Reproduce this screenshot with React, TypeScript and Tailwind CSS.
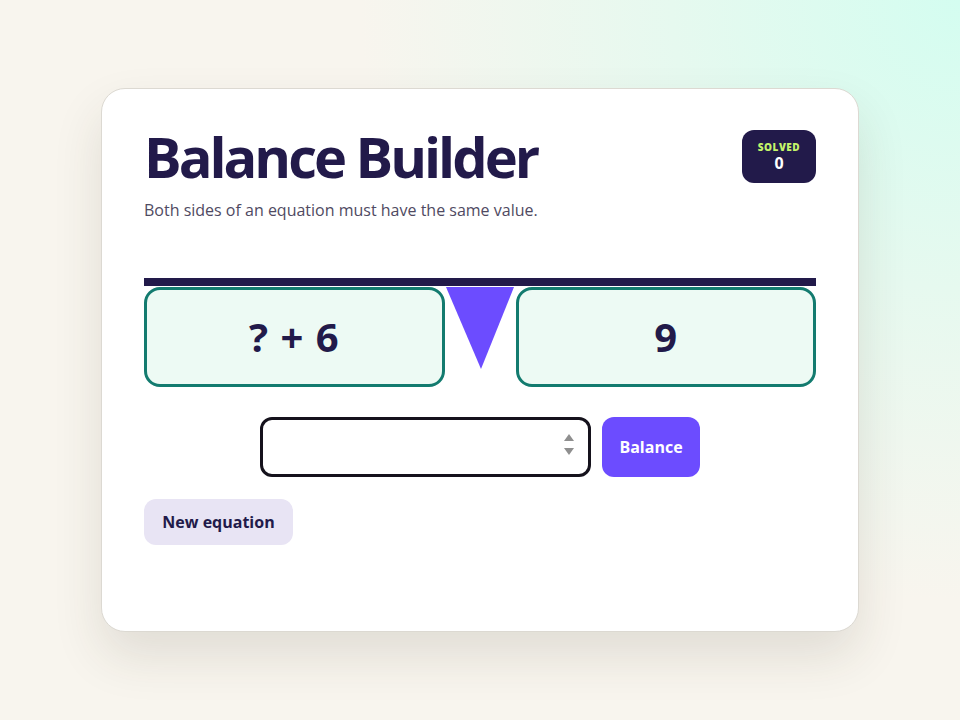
import React from "react";

const font = { fontFamily: '"Open Sans", "Noto Sans", sans-serif' };

export default function App() {
  return (
    <div
      className="min-h-[720px] w-full flex items-start justify-center bg-[#f8f5ee] bg-[radial-gradient(circle_at_100%_0%,#d4fdf0_0%,#e6f9ef_24%,#f8f5ee_50%)]"
      style={font}
    >
      <div className="mt-[88px] w-[758px] h-[544px] rounded-[24px] border border-[#dcd9d2] bg-white px-[42px] pt-[32px] shadow-[0_24px_50px_rgba(60,50,30,0.12)]">
        {/* Header */}
        <div className="flex items-start justify-between">
          <div>
            <h1 className="text-[56px] leading-[70px] font-bold tracking-[-3px] text-[#221a4a]">
              Balance Builder
            </h1>
            <p className="mt-[8px] text-[16px] leading-[22px] text-[#4f4a62]">
              Both sides of an equation must have the same value.
            </p>
          </div>
          <div className="mt-[9px] flex h-[53px] w-[74px] flex-col items-center justify-center gap-[1px] rounded-[12px] bg-[#221a4a]">
            <span className="text-[10px] font-extrabold leading-[11px] tracking-[0.5px] text-[#c4f46a]">
              SOLVED
            </span>
            <span className="text-[16px] font-bold leading-[18px] text-white">0</span>
          </div>
        </div>

        {/* Scale */}
        <div className="mt-[57px]">
          <div className="h-[8px] w-full bg-[#221a4a]" />
          <div className="mt-[1px] flex items-start">
            <div className="flex h-[100px] flex-1 items-center justify-center rounded-[16px] border-[3px] border-[#137b6f] bg-[#edfaf4]">
              <span className="text-[40px] font-bold tracking-[1px] text-[#221a4a]">? + 6</span>
            </div>
            <div className="flex w-[71px] justify-center">
              <svg width="68" height="82" viewBox="0 0 68 82">
                <polygon points="0,0 68,0 35,82" fill="#6c4cff" />
              </svg>
            </div>
            <div className="flex h-[100px] flex-1 items-center justify-center rounded-[16px] border-[3px] border-[#137b6f] bg-[#edfaf4]">
              <span className="text-[40px] font-bold text-[#221a4a]">9</span>
            </div>
          </div>
        </div>

        {/* Answer */}
        <div className="mt-[30px] flex justify-center gap-[11px]">
          <div className="relative">
            <input
              type="number"
              className="h-[60px] w-[331px] rounded-[12px] border-[3px] border-[#15121c] bg-white px-4 pr-10 text-[20px] text-[#221a4a] outline-none [appearance:textfield] [&::-webkit-inner-spin-button]:appearance-none"
            />
            {/* spinner arrows */}
            <div className="pointer-events-none absolute right-[17px] top-[17px] flex flex-col gap-[7px]">
              <svg width="10" height="7" viewBox="0 0 10 7">
                <polygon points="5,0 10,7 0,7" fill="#8f8f8f" />
              </svg>
              <svg width="10" height="7" viewBox="0 0 10 7">
                <polygon points="0,0 10,0 5,7" fill="#8f8f8f" />
              </svg>
            </div>
          </div>
          <button className="h-[60px] w-[98px] rounded-[12px] bg-[#6c4cff] text-[16px] font-bold text-white">
            Balance
          </button>
        </div>

        <button className="mt-[22px] h-[46px] w-[149px] rounded-[12px] bg-[#e8e4f4] text-[16px] font-bold text-[#221a4a]">
          New equation
        </button>
      </div>
    </div>
  );
}
